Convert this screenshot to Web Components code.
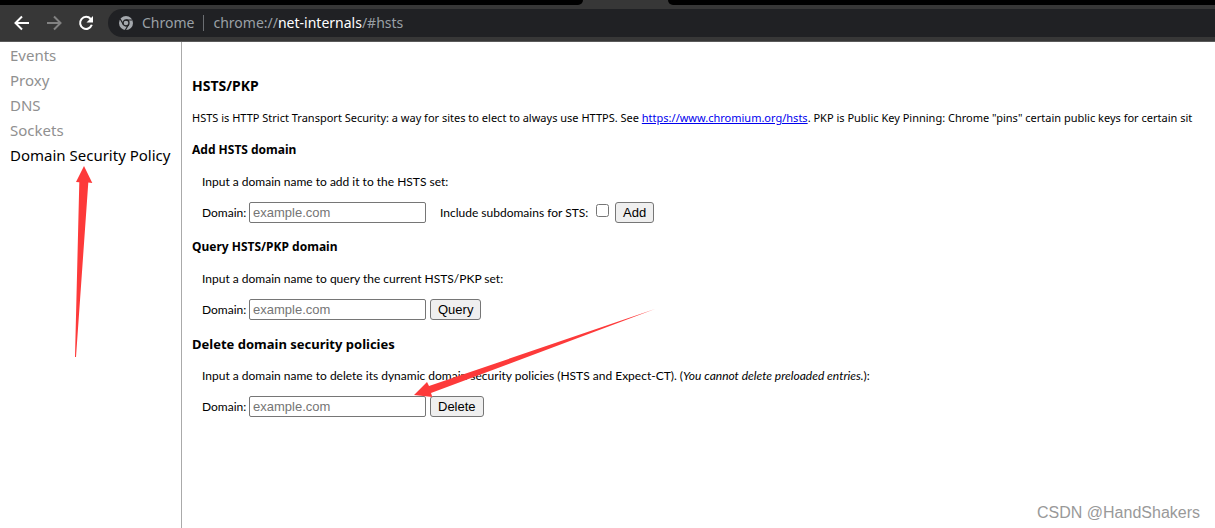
<!DOCTYPE html>
<html lang="en">
<head>
<meta charset="utf-8">
<title>net-internals</title>
<style>
html, body { margin: 0; height: 100%; }
body { font-family: "Noto Sans", "Open Sans", sans-serif; background: #fff; }
</style>
</head>
<body>
<browser-window>
  <browser-toolbar slot="toolbar"></browser-toolbar>
  <side-nav slot="nav"></side-nav>
  <hsts-view></hsts-view>
  <pointer-arrows slot="overlay"></pointer-arrows>
  <page-watermark slot="overlay">CSDN @HandShakers</page-watermark>
</browser-window>
<script>
function define(name, html) {
  const template = document.createElement('template');
  template.innerHTML = html;
  customElements.define(name, class extends HTMLElement {
    constructor() {
      super();
      this.attachShadow({ mode: 'open' }).append(template.content.cloneNode(true));
    }
  });
}

define('browser-window', `
<style>
:host { display: flex; flex-direction: column; position: relative; min-height: 100%; overflow: hidden; }
.body { display: flex; flex: 1; min-width: 0; }
main { flex: 1; min-width: 0; overflow: hidden; }
</style>
<slot name="toolbar"></slot>
<div class="body"><slot name="nav"></slot><main><slot></slot></main></div>
<slot name="overlay"></slot>`);

define('browser-toolbar', `
<style>
:host { display: block; background: #373737; border-bottom: 1px solid #5a5a5a; }
.tabs { display: flex; height: 5px; }
.tabs span { background: #000; }
.left { flex: 0 0 48%; border-bottom-right-radius: 5px; }
.tabs .gap { flex: 0 0 7%; background: #373737; }
.right { flex: 1; border-bottom-left-radius: 5px; }
.bar { display: flex; align-items: center; padding: 4px 0; }
button { width: 32px; height: 28px; padding: 0; border: 0; background: none; display: grid; place-items: center; }
.buttons { display: flex; padding: 0 6px; }
.omni { flex: 1; display: flex; align-items: center; height: 28px; padding-left: 11px; border-radius: 14px 0 0 14px; background: #202124; color: #9aa0a6; font-size: 14px; line-height: 20px; white-space: nowrap; }
.chip { margin-left: 9px; }
.rule { width: 1px; height: 16px; background: #6b6e72; margin: 0 9px; }
b { font-weight: 400; color: #fff; }
</style>
<div class="tabs"><span class="left"></span><span class="gap"></span><span class="right"></span></div>
<div class="bar">
<div class="buttons">
<button aria-label="Back"><svg width="16" height="16" viewBox="0 0 16 16" fill="none" stroke="#fff" stroke-width="2"><path d="M15 8H2M8 1.500L1.500 8L8 14.500"/></svg></button>
<button aria-label="Forward"><svg width="16" height="16" viewBox="0 0 16 16" fill="none" stroke="#828282" stroke-width="2"><path d="M1 8H14M8 1.500L14.500 8L8 14.500"/></svg></button>
<button aria-label="Reload"><svg width="16" height="16" viewBox="0 0 16 16"><path d="M12.700 4A6 6 0 1 0 13.800 9.800" fill="none" stroke="#fff" stroke-width="2"/><path d="M15 1V7.500H8.500Z" fill="#fff"/></svg></button>
</div>
<div class="omni">
<svg width="14" height="14" viewBox="0 0 14 14"><circle cx="7" cy="7" r="7" fill="#a4a8ad"/><circle cx="7" cy="7" r="3" fill="none" stroke="#202124" stroke-width="1.300"/><path d="M7 4H13.300M4.400 8.500L1.200 3M9.600 8.500L6.400 14" stroke="#202124" stroke-width="1.200"/></svg>
<span class="chip">Chrome</span><span class="rule"></span><span>chrome://<b>net-internals</b>/#hsts</span>
</div>
</div>`);

define('side-nav', `
<style>
:host { display: block; box-sizing: border-box; flex: 0 0 182px; padding: 1px 10px; border-right: 1px solid #aaa; }
nav { display: flex; flex-direction: column; }
a { font-size: 15px; line-height: 25px; color: #909090; text-decoration: none; white-space: nowrap; }
a[aria-current] { color: #000; }
</style>
<nav><a href="#events">Events</a><a href="#proxy">Proxy</a><a href="#dns">DNS</a><a href="#sockets">Sockets</a><a href="#hsts" aria-current="page">Domain Security Policy</a></nav>`);

define('hsts-view', `
<style>
:host { display: block; padding: 36px 0 16px 10px; font: 12px/16px Lato, "Noto Sans", sans-serif; white-space: nowrap; color: #000; }
h2 { margin: 0; font: bold 14px/16px "Noto Sans", sans-serif; }
p { margin: 16px 0; font: 11px/16px "Noto Sans", sans-serif; }
a { color: #00e; }
domain-form { margin-bottom: 16px; }
</style>
<h2>HSTS/PKP</h2>
<p>HSTS is HTTP Strict Transport Security: a way for sites to elect to always use HTTPS. See <a href="https://www.chromium.org/hsts">https://www.chromium.org/hsts</a>. PKP is Public Key Pinning: Chrome "pins" certain public keys for certain sit</p>
<domain-form action="Add" subdomains><span slot="title">Add HSTS domain</span>Input a domain name to add it to the HSTS set:</domain-form>
<domain-form action="Query"><span slot="title">Query HSTS/PKP domain</span>Input a domain name to query the current HSTS/PKP set:</domain-form>
<domain-form action="Delete" large><span slot="title">Delete domain security policies</span>Input a domain name to delete its dynamic domain security policies (HSTS and Expect-CT). (<i>You cannot delete preloaded entries.</i>):</domain-form>`);

class DomainForm extends HTMLElement {
  connectedCallback() {
    if (this.shadowRoot) return;
    const level = this.hasAttribute('large') ? 'h3' : 'h4';
    const extra = this.hasAttribute('subdomains')
      ? '<label class="check" for="sub">Include subdomains for STS:</label><input id="sub" type="checkbox">' : '';
    this.attachShadow({ mode: 'open' }).innerHTML = `
<style>
:host { display: block; }
h3, h4 { margin: 0; font: bold 12px/16px "Noto Sans", sans-serif; }
h3 { font-size: 13px; }
.content { padding: 16px 0 0 10px; }
form { display: flex; align-items: center; margin-top: 12px; }
label { width: 47px; }
.check { width: 152px; margin-left: 10px; }
input, button { box-sizing: border-box; font: 13px "Liberation Sans", Arial, sans-serif; border: 1px solid #767676; border-radius: 2px; }
input[type=text] { width: 177px; height: 21px; padding: 1px 3px; margin-right: 4px; }
input::placeholder { color: #757575; }
input[type=checkbox] { width: 13px; height: 13px; margin: 0 6px 4px 4px; }
button { height: 21px; padding: 0 7px; border-radius: 3px; background: #efefef; color: #000; }
</style>
<${level}><slot name="title"></slot></${level}>
<div class="content"><slot></slot>
<form><label for="domain">Domain:</label><input id="domain" type="text" placeholder="example.com">${extra}<button type="button">${this.getAttribute('action')}</button></form></div>`;
  }
}
customElements.define('domain-form', DomainForm);

define('pointer-arrows', `
<style>
:host { position: absolute; top: 0; left: 0; pointer-events: none; }
svg { display: block; }
</style>
<svg width="660" height="420" viewBox="0 0 660 420" fill="#fd3a3a" aria-hidden="true">
<path d="M84 166L92.300 183L88.300 182.500L76 357H75L79.300 182.300L76 182Z"/>
<path d="M414 395L427 382L429 386L655 309L431 393L432.300 397Z"/>
</svg>`);

define('page-watermark', `
<style>
:host { position: absolute; right: 15px; bottom: 5px; font: 16px/20px "Liberation Sans", Arial, sans-serif; color: #999; text-shadow: -1px -1px 1px #fff; }
</style><slot></slot>`);
</script>
</body>
</html>
